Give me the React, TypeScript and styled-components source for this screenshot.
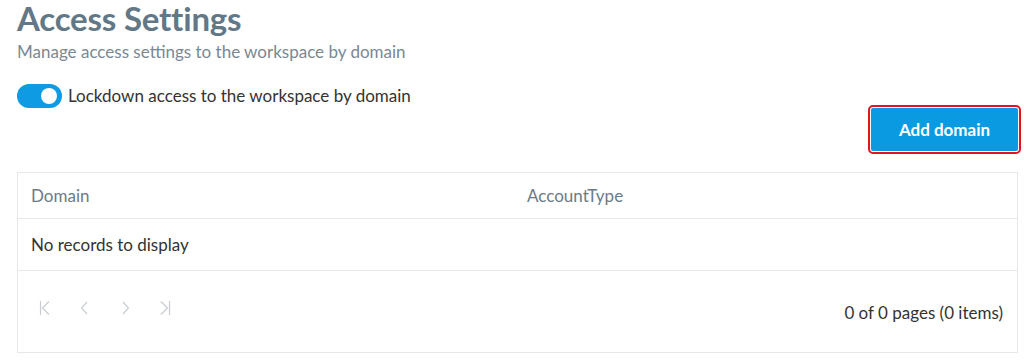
import React from "react";
import styled, { createGlobalStyle } from "styled-components";

const Global = createGlobalStyle`
  html, body { margin: 0; padding: 0; background: #fff; }
  body { font-family: Lato, "Noto Sans", sans-serif; color: #333; }
  * { box-sizing: border-box; }
`;

const Page = styled.div`
  padding: 0 10px 0 17px;
  display: flex;
  flex-direction: column;
`;

const Title = styled.h1`
  margin: 0;
  padding-top: 1px;
  font-size: 33px;
  line-height: 34px;
  font-weight: 700;
  color: #637886;
  letter-spacing: -0.2px;
`;

const Subtitle = styled.p`
  margin: 6px 0 0;
  font-size: 17px;
  line-height: 22px;
  color: #7a8893;
`;

const ToggleRow = styled.label`
  display: flex;
  align-items: center;
  gap: 6px;
  margin-top: 21px;
  font-size: 17px;
  line-height: 22px;
  color: #333;
`;

const Switch = styled.span<{ $on: boolean }>`
  position: relative;
  width: 45px;
  height: 24px;
  border-radius: 12px;
  background: ${(p) => (p.$on ? "#0e9be3" : "#c8ccd2")};
  flex: none;
  &::after {
    content: "";
    position: absolute;
    top: 4px;
    left: ${(p) => (p.$on ? "24px" : "4px")};
    width: 16px;
    height: 16px;
    border-radius: 50%;
    background: #fff;
  }
`;

const Actions = styled.div`
  display: flex;
  justify-content: flex-end;
  margin-top: 0;
`;

const PrimaryButton = styled.button`
  width: 147px;
  height: 43px;
  border: none;
  border-radius: 2px;
  background: #0a9ae2;
  color: #fff;
  font-family: inherit;
  font-size: 17px;
  font-weight: 700;
  outline: 2px solid #e3141d;
  outline-offset: 1px;
  margin-right: 0;
  cursor: pointer;
`;

const Table = styled.div`
  margin-top: 21px;
  border: 1px solid #e6e8ea;
  display: flex;
  flex-direction: column;
`;

const HeaderRow = styled.div`
  display: grid;
  grid-template-columns: 496px 1fr;
  height: 46px;
  align-items: center;
  border-bottom: 1px solid #e6e8ea;
`;

const HeaderCell = styled.div`
  padding-left: 13px;
  font-size: 17px;
  color: #6b7b87;
`;

const EmptyRow = styled.div`
  height: 52px;
  display: flex;
  align-items: center;
  padding-left: 13px;
  font-size: 17px;
  color: #333;
  border-bottom: 1px solid #e6e8ea;
`;

const Pager = styled.div`
  height: 81px;
  display: flex;
  align-items: center;
  justify-content: space-between;
  padding: 0 14px 0 17px;
`;

const PagerButtons = styled.div`
  display: flex;
  gap: 20px;
  margin-top: -8px;
`;

const PagerButton = styled.span`
  width: 20px;
  height: 20px;
  display: flex;
  align-items: center;
  justify-content: center;
  color: #c9cdd3;
`;

const PagerInfo = styled.div`
  font-size: 17px;
  color: #333;
  margin-top: 1px;
`;

const Icon = ({ d }: { d: string }) => (
  <svg width="12" height="16" viewBox="0 0 12 16" fill="none" stroke="currentColor" strokeWidth="1.2">
    <path d={d} />
  </svg>
);

export default function App() {
  return (
    <>
      <Global />
      <Page>
        <Title>Access Settings</Title>
        <Subtitle>Manage access settings to the workspace by domain</Subtitle>
        <ToggleRow>
          <Switch $on />
          Lockdown access to the workspace by domain
        </ToggleRow>
        <Actions>
          <PrimaryButton>Add domain</PrimaryButton>
        </Actions>
        <Table>
          <HeaderRow>
            <HeaderCell>Domain</HeaderCell>
            <HeaderCell>AccountType</HeaderCell>
          </HeaderRow>
          <EmptyRow>No records to display</EmptyRow>
          <Pager>
            <PagerButtons>
              <PagerButton><Icon d="M1.5 1v14M10 1.5L3.5 8l6.5 6.5" /></PagerButton>
              <PagerButton><Icon d="M8 2L2.5 8 8 14" /></PagerButton>
              <PagerButton><Icon d="M4 2l5.5 6L4 14" /></PagerButton>
              <PagerButton><Icon d="M10.5 1v14M2 1.5L8.5 8 2 14.5" /></PagerButton>
            </PagerButtons>
            <PagerInfo>0 of 0 pages (0 items)</PagerInfo>
          </Pager>
        </Table>
      </Page>
    </>
  );
}
